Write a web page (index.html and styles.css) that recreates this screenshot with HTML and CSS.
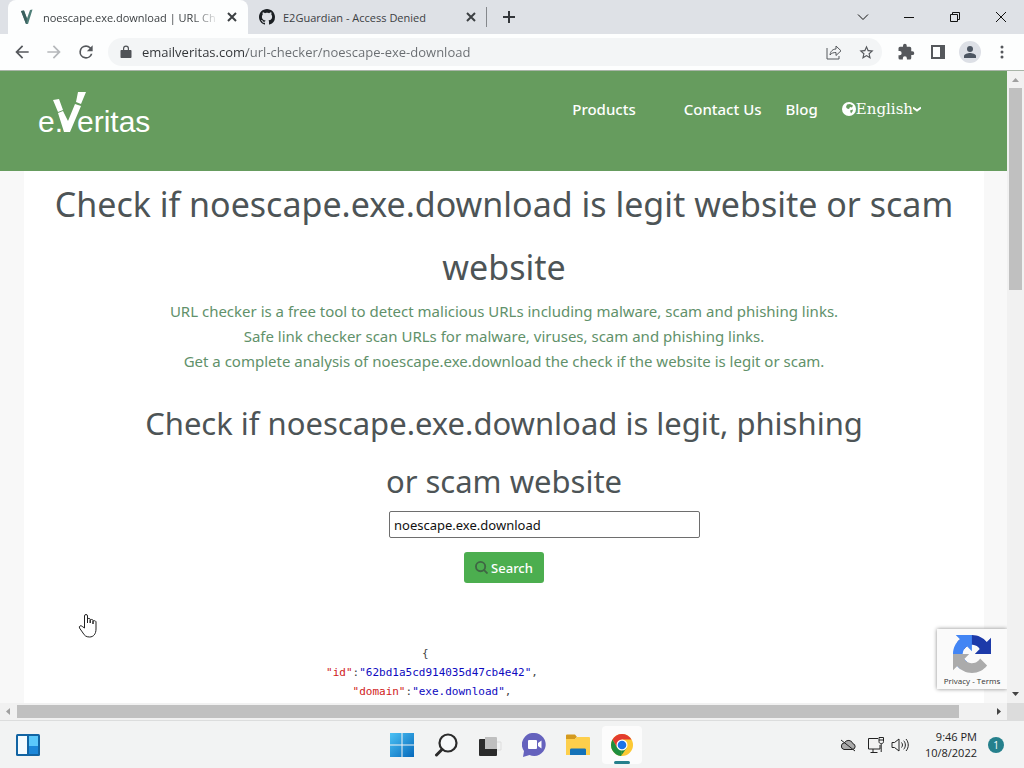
FILE: index.html
```html
<!DOCTYPE html>
<html lang="en">
<head>
  <meta charset="UTF-8" />
  <title>noescape.exe.download | URL Checker</title>
  <meta name="viewport" content="width=device-width, initial-scale=1.0" />
  <link rel="stylesheet" href="styles.css">
</head>
<body>

  <!-- Tabs -->
  <div class="tab-strip">
    <div class="tab active">
      <svg class="favicon" viewBox="0 0 16 16"><path d="M2 2l3-.6L8 9.500 11 1l2.500-.500L9 15H7z" fill="#4f7f78"/><path d="M2 2l3-.6L8 9.500 7.500 15H7z" fill="#3a5f5d"/></svg>
      <a href="#" class="tab-title">noescape.exe.download | URL Ch</a>
      <button class="tab-close" aria-label="Close tab"><svg viewBox="0 0 10 10"><path d="M1 1l8 8M9 1L1 9"/></svg></button>
    </div>
    <div class="tab">
      <svg class="favicon" viewBox="0 0 16 16"><path fill="#1b1f23" fill-rule="evenodd" d="M8 0C3.580 0 0 3.580 0 8c0 3.540 2.290 6.530 5.470 7.590.4.070.55-.17.55-.38 0-.19-.01-.82-.01-1.490-2.010.37-2.530-.49-2.690-.94-.09-.23-.48-.94-.82-1.130-.28-.15-.68-.52-.01-.53.63-.01 1.080.58 1.230.82.72 1.210 1.870.87 2.330.66.070-.52.28-.87.51-1.070-1.780-.2-3.640-.89-3.640-3.950 0-.87.31-1.590.82-2.150-.08-.2-.36-1.020.08-2.120 0 0 .67-.21 2.200.82.64-.18 1.320-.27 2-.27s1.360.09 2 .27c1.530-1.040 2.200-.82 2.200-.82.44 1.100.16 1.920.08 2.120.51.56.82 1.270.82 2.150 0 3.070-1.870 3.750-3.650 3.950.29.25.54.73.54 1.480 0 1.070-.01 1.930-.01 2.200 0 .21.15.46.55.38A8.010 8.010 0 0 0 16 8c0-4.420-3.580-8-8-8z"/></svg>
      <a href="#" class="tab-title">E2Guardian - Access Denied</a>
      <button class="tab-close" aria-label="Close tab"><svg viewBox="0 0 10 10"><path d="M1 1l8 8M9 1L1 9"/></svg></button>
    </div>
    <button class="new-tab" aria-label="New tab"><svg viewBox="0 0 12 12"><path d="M6 0v12M0 6h12"/></svg></button>
    <div class="window-buttons">
      <button aria-label="Search tabs"><svg viewBox="0 0 12 12"><path d="M1 3.500l5 5 5-5"/></svg></button>
      <button aria-label="Minimize"><svg viewBox="0 0 12 12"><path d="M1 6.500h10"/></svg></button>
      <button aria-label="Restore"><svg viewBox="0 0 12 12"><path d="M1.500 3.500h7v7h-7zM3.500 3V1.500h7v7H9"/></svg></button>
      <button aria-label="Close"><svg viewBox="0 0 12 12"><path d="M1 1l10 10M11 1L1 11"/></svg></button>
    </div>
  </div>

  <!-- Address bar -->
  <div class="toolbar">
    <button class="tool nav" aria-label="Back"><svg viewBox="0 0 24 24"><path d="M20 11H7.830l5.590-5.590L12 4l-8 8 8 8 1.410-1.410L7.830 13H20z"/></svg></button>
    <button class="tool nav faded" aria-label="Forward"><svg viewBox="0 0 24 24"><path d="M12 4l-1.410 1.410L16.170 11H4v2h12.170l-5.580 5.590L12 20l8-8z"/></svg></button>
    <button class="tool nav" aria-label="Reload"><svg viewBox="0 0 24 24"><path d="M17.650 6.350A7.960 7.960 0 0 0 12 4a8 8 0 1 0 7.730 10h-2.080A6 6 0 1 1 12 6c1.660 0 3.140.69 4.220 1.780L13 11h7V4z"/></svg></button>
    <div class="omnibox">
      <svg class="lock" viewBox="0 0 12 14"><path d="M1.500 5H3V3.500a3 3 0 0 1 6 0V5h1.500c.6 0 1 .4 1 1v6c0 .6-.4 1-1 1h-9c-.6 0-1-.4-1-1V6c0-.6.400-1 1-1zM4.200 5h3.600V3.500a1.800 1.800 0 0 0-3.600 0z"/></svg>
      <input type="text" class="url" aria-label="Address" value="emailveritas.com/url-checker/noescape-exe-download">
      <button class="tool" aria-label="Share"><svg class="thin" viewBox="0 0 18 18"><path d="M2 5v11h12v-3M5 12c.5-4 3-6 6-6V3l5 4.800-5 4.700V9.500c-2.500 0-4.500.5-6 2.500z"/></svg></button>
      <button class="tool" aria-label="Bookmark"><svg class="star" viewBox="0 0 24 24"><path d="M22 9.240l-7.190-.62L12 2 9.190 8.630 2 9.240l5.460 4.730L5.820 21 12 17.270 18.180 21l-1.630-7.030zM12 15.400l-3.760 2.270 1-4.280-3.320-2.880 4.380-.38L12 6.100l1.710 4.040 4.380.38-3.320 2.880 1 4.280z"/></svg></button>
    </div>
    <button class="tool" aria-label="Extensions"><svg viewBox="0 0 24 24"><path d="M20.500 11H19V7a2 2 0 0 0-2-2h-4V3.500a2.500 2.500 0 0 0-5 0V5H4a2 2 0 0 0-2 2v3.800h1.500a2.700 2.700 0 0 1 0 5.400H2V20a2 2 0 0 0 2 2h3.800v-1.500a2.700 2.700 0 0 1 5.400 0V22H17a2 2 0 0 0 2-2v-4h1.500a2.500 2.500 0 0 0 0-5z"/></svg></button>
    <button class="tool" aria-label="Side panel"><svg viewBox="0 0 18 18"><path fill-rule="evenodd" d="M2 2h14v14H2zM4 4v10h7V4z"/></svg></button>
    <button class="tool avatar" aria-label="Profile"><svg viewBox="0 0 18 18"><circle cx="9" cy="6" r="3"/><path d="M3 15v-2c0-2 4-3 6-3s6 1 6 3v2z"/></svg></button>
    <button class="tool" aria-label="Menu"><svg viewBox="0 0 18 18"><circle cx="9" cy="4" r="1.500"/><circle cx="9" cy="9" r="1.500"/><circle cx="9" cy="14" r="1.500"/></svg></button>
  </div>

  <!-- Web page -->
  <div class="viewport">
    <div class="page">
      <header class="site-header">
        <a href="#" class="logo" aria-label="eVeritas home">
          <svg viewBox="0 0 120 52" width="120" height="52">
            <text x="0" y="42">e.</text>
            <path d="M15 10l6-1 4 11-5 2zM40 2h8l-5 12-5-2zM20 23l5-2 5 10 7-17 6 2-11 26h-6z"/>
            <text x="39" y="42">eritas</text>
          </svg>
        </a>
        <nav class="site-nav">
          <a href="#" class="products">Products</a>
          <a href="#">Contact Us</a>
          <a href="#">Blog</a>
          <button class="language">
            <svg class="globe" viewBox="0 0 14 14"><circle cx="7" cy="7" r="7" fill="#fff"/><path d="M5 2.500l3-.5 3 1.500-1 2-2-.5-1 2-2-.5L4 5zM8 8.500l3-1-.5 2L9 11.500z" fill="#669c5e"/></svg>English<svg class="chevron" viewBox="0 0 8 8"><path d="M0 2.500l4 3 4-3"/></svg>
          </button>
        </nav>
      </header>

      <main class="card">
        <h1>Check if noescape.exe.download is legit website or scam website</h1>
        <p class="intro">
          URL checker is a free tool to detect malicious URLs including malware, scam and phishing links.<br>
          Safe link checker scan URLs for malware, viruses, scam and phishing links.<br>
          Get a complete analysis of noescape.exe.download the check if the website is legit or scam.
        </p>
        <h2>Check if noescape.exe.download is legit, phishing or scam website</h2>
        <form class="search-form">
          <input type="text" class="domain" aria-label="Website address" value="noescape.exe.download">
          <button type="button" class="search">
            <svg viewBox="0 0 14 14"><circle cx="6" cy="6" r="5"/><path d="M9.500 9.500l4 4"/></svg>Search
          </button>
        </form>
<pre class="result">{  
<span class="key">"id"</span>:<span class="value">"62bd1a5cd914035d47cb4e42"</span>,
<span class="key">"domain"</span>:<span class="value">"exe.download"</span>,</pre>
      </main>

      <div class="captcha">
        <svg viewBox="0 0 64 64">
          <path fill="#1c3aa9" d="M64 31.955l-.033-1.370V4.687l-7.160 7.160C50.948 4.674 42.033.093 32.050.093c-10.400 0-19.622 4.960-25.458 12.640l11.736 11.860a15.550 15.550 0 0 1 4.754-5.334c2.050-1.600 4.952-2.906 8.968-2.906.485 0 .86.057 1.135.163 4.976.393 9.288 3.140 11.828 7.124l-8.307 8.307L64 31.953"/>
          <path fill="#4285f4" d="M31.862.094l-1.370.033H4.594l7.160 7.160C4.580 13.147 0 22.060 0 32.046c0 10.400 4.960 19.622 12.640 25.458L24.500 45.768a15.550 15.550 0 0 1-5.334-4.754c-1.600-2.050-2.906-4.952-2.906-8.968 0-.485.057-.86.163-1.135.393-4.976 3.140-9.288 7.124-11.828l8.307 8.307L31.860.095"/>
          <path fill="#ababab" d="M.001 32.045l.033 1.370v25.898l7.160-7.160c5.860 7.173 14.774 11.754 24.760 11.754 10.400 0 19.622-4.960 25.458-12.640l-11.736-11.860a15.550 15.550 0 0 1-4.754 5.334c-2.050 1.600-4.952 2.906-8.968 2.906-.485 0-.86-.057-1.135-.163-4.976-.393-9.288-3.140-11.828-7.124l8.307-8.307c-10.522.04-22.400.066-27.295-.005"/>
        </svg>
        <div class="captcha-links"><a href="#">Privacy</a> - <a href="#">Terms</a></div>
      </div>

      <svg class="hand" viewBox="0 0 20 25"><path d="M6.500 15V3a1.500 1.500 0 0 1 3 0v7-3.500c0-1.500 2.700-1.500 2.700 0V10 7.500c0-1.400 2.800-1.400 2.800 0V11 8.500c0-1.300 3-1 3 .500v7c0 5-2.500 8-6.500 8-3.500 0-5-1.500-6.500-4L1.500 15c-1-2 1.500-3 2.700-1.600z"/></svg>
    </div>

    <div class="scroll-y">
      <svg viewBox="0 0 17 17" class="off"><path d="M5 11l3.500-4 3.500 4z"/></svg>
      <div class="thumb"></div>
      <svg viewBox="0 0 17 17"><path d="M5 6l3.500 4L12 6z"/></svg>
    </div>
    <div class="scroll-x">
      <svg viewBox="0 0 17 17" class="off"><path d="M10 5L6 8.500l4 3.500z"/></svg>
      <div class="thumb"></div>
      <svg viewBox="0 0 17 17"><path d="M7 5l4 3.500L7 12z"/></svg>
    </div>
    <div class="corner"></div>
  </div>

  <!-- Taskbar -->
  <footer class="taskbar">
    <button class="widgets" aria-label="Widgets">
      <svg viewBox="0 0 24 22"><rect width="24" height="22" rx="1.500" fill="#1264a3"/><rect x="2" y="2" width="9" height="18" fill="#f4fbff"/><rect x="13" y="2" width="9" height="10" fill="#5bc8fb"/><rect x="13" y="12" width="9" height="8" fill="#1c87d9"/></svg>
    </button>
    <div class="apps">
      <button aria-label="Start"><svg viewBox="0 0 24 24"><defs><linearGradient id="win" x2="1" y2="1"><stop stop-color="#4cc2f5"/><stop offset="1" stop-color="#0669bb"/></linearGradient></defs><path fill="url(#win)" d="M0 0h11.500v11.500H0zM12.500 0H24v11.500H12.500zM0 12.500h11.500V24H0zM12.500 12.500H24V24H12.500z"/></svg></button>
      <button aria-label="Search"><svg viewBox="0 0 24 24"><circle cx="14" cy="10" r="8.500" fill="#f6f8f9" stroke="#2b2b2b" stroke-width="2.200"/><path d="M8 16.500L2.500 22" stroke="#2b2b2b" stroke-width="3" stroke-linecap="round"/></svg></button>
      <button aria-label="Task view"><svg viewBox="0 0 24 24"><path d="M18 9h5v8h-5" fill="none" stroke="#ddd"/><rect x="1" y="6" width="18" height="17" rx="1" fill="#2b2b2b"/><path d="M7 4h11a1 1 0 0 1 1 1v11H7z" fill="#bfbfbf"/></svg></button>
      <button aria-label="Chat"><svg viewBox="0 0 24 24"><path d="M12.500 0a11.500 11.500 0 1 1-5 22L1 24l1-6A11.500 11.500 0 0 1 12.500 0z" fill="#6562bd"/><rect x="6" y="7" width="9" height="9" rx="1" fill="#fff"/><path d="M16 10l3.500-2.500v8L16 13z" fill="#fff"/></svg></button>
      <button aria-label="File Explorer"><svg viewBox="0 0 24 24"><path d="M0 2.500a1 1 0 0 1 1-1h8l2 2.500-2 2H0z" fill="#d49a1f"/><path d="M0 6h9l2-2h12a1 1 0 0 1 1 1v17H0z" fill="#fdcf4c"/><path d="M4 22v-5c0-1 .500-1.500 1.500-1.500h13c1 0 1.500.5 1.500 1.500v5z" fill="#1472b8"/></svg></button>
      <button class="running" aria-label="Chrome"><svg viewBox="0 0 24 24"><circle cx="12" cy="12" r="11" fill="#fcc934"/><path d="M2.500 6.500A11 11 0 0 1 21.500 6.500H12L7.200 14.800z" fill="#e33b2e"/><path d="M2.500 6.500l4.700 8.300 4.800 2.700L11 23A11 11 0 0 1 2.500 6.500z" fill="#1e8e3e"/><path d="M11 23l5.800-8.200L12 17z" fill="#1e8e3e"/><circle cx="12" cy="12" r="5.500" fill="#fff"/><circle cx="12" cy="12" r="4.300" fill="#1a73e8"/></svg></button>
    </div>
    <div class="tray">
      <svg viewBox="0 0 16 16"><path d="M4 12.500h8.500a3 3 0 0 0 .3-5.900A4.500 4.500 0 0 0 4.500 5.800 3.400 3.400 0 0 0 4 12.500z" fill="#aaa"/><path d="M1 3l14 11"/></svg>
      <svg class="network" viewBox="0 0 18 16"><path d="M11 1.500H1.500v10.500H13V8M6 12v3.500M3.500 15.500h7M12 .500h4.500v4c0 1.500-.7 2-2.200 2S12 6 12 4.500zM12 3h4.500M14.200 7v8"/></svg>
      <svg class="volume" viewBox="0 0 18 16"><path d="M1 5.500h2.500L8 2v12l-4.500-3.500H1zM10.500 5.500c1.300 1.500 1.300 3.500 0 5M12.700 3.700c2.200 2.500 2.200 6.100 0 8.600M15 2c3 3.500 3 8.500 0 12"/></svg>
      <div class="clock"><time>9:46 PM</time><time>10/8/2022</time></div>
      <div class="notice">1</div>
    </div>
  </footer>

</body>
</html>
```
FILE: styles.css
```css
* { margin: 0; padding: 0; box-sizing: border-box; }

body {
  font-family: "Open Sans", "Noto Sans", sans-serif;
  font-size: 11px;
  color: #3c4043;
  height: 100vh;
  display: flex;
  flex-direction: column;
  overflow: hidden;
}

button { border: 0; background: none; font: inherit; color: inherit; }
a { color: inherit; text-decoration: none; }
svg { display: block; flex: none; }

/* Tabs */
.tab-strip {
  display: flex;
  align-items: center;
  height: 34px;
  padding-left: 8px;
  background: #dee1e6;
}

.tab {
  display: flex;
  align-items: center;
  gap: 8px;
  width: 239px;
  height: 34px;
  padding: 0 10px 0 11px;
  border-right: 1px solid transparent;
}

.tab:not(.active) {
  height: 20px;
  border-right-color: #85888c;
}

.active {
  width: 240px;
  background: #fdfefe;
  border-radius: 8px 8px 0 0;
}

.favicon { width: 16px; height: 16px; }

.tab-title {
  flex: 1;
  white-space: nowrap;
}

.active .tab-title {
  mask-image: linear-gradient(to right, #000 85%, transparent);
}

.tab-close {
  display: grid;
  place-items: center;
  width: 10px;
  height: 16px;
}

.tab-close svg { width: 10px; height: 10px; stroke: #3c4043; stroke-width: 2; }

.new-tab { padding: 0 16px; }
.new-tab svg { width: 12px; height: 12px; stroke: #33363a; stroke-width: 2; }

.window-buttons { display: flex; margin-left: auto; }

.window-buttons button {
  display: grid;
  place-items: center;
  width: 46px;
  height: 28px;
}

.window-buttons svg { width: 12px; height: 12px; fill: none; stroke: #111; }

/* Address bar */
.toolbar {
  display: flex;
  align-items: center;
  height: 37px;
  padding: 0 6px;
  background: #fdfefe;
  border-bottom: 1px solid #a9b5a8;
}

.tool {
  display: grid;
  place-items: center;
  width: 32px;
  height: 28px;
}

.tool svg { width: 18px; height: 18px; fill: #55585c; }
.nav svg { width: 20px; height: 20px; }
.tool.faded svg { fill: #b5b8bb; }
.tool .thin { fill: none; stroke: #55585c; }
.tool .star { width: 17px; height: 17px; }

.avatar svg {
  width: 22px;
  height: 22px;
  padding: 2px;
  border-radius: 50%;
  background: #dde0e6;
  fill: #4d5662;
}

.omnibox {
  display: flex;
  align-items: center;
  flex: 1;
  height: 28px;
  margin: 0 8px 0 6px;
  padding-left: 12px;
  border-radius: 14px;
  background: #f3f5f6;
}

.lock { width: 12px; height: 14px; fill: #505357; }

.url {
  flex: 1;
  margin-left: 10px;
  border: 0;
  outline: 0;
  font: 13px/20px "Open Sans", "Noto Sans", sans-serif;
  color: #303336;
  background: linear-gradient(to right, #303336 105px, #686c70 105px) text;
  -webkit-text-fill-color: transparent;
}

/* Page and scrollbars */
.viewport {
  flex: 1;
  min-height: 0;
  display: grid;
  grid-template-columns: minmax(0, 1fr) 17px;
  grid-template-rows: minmax(0, 1fr) 17px;
}

.page {
  position: relative;
  display: flex;
  flex-direction: column;
  overflow: hidden;
  background: #f8f8f8;
  font-family: "Noto Sans", sans-serif;
}

.scroll-y, .scroll-x { display: flex; background: #f1f1f1; }
.scroll-y { flex-direction: column; align-items: center; }
.scroll-x { align-items: center; }
.scroll-y svg, .scroll-x svg { width: 17px; height: 17px; fill: #444; }
.scroll-y .off, .scroll-x .off { fill: #a0a0a0; }
.scroll-y .thumb { width: 13px; height: 32%; margin-bottom: auto; background: #c0c0c0; }
.scroll-x .thumb { width: 93.5%; height: 13px; margin-right: auto; background: #c0c0c0; }
.corner { background: #dcdcdc; }

.site-header {
  display: flex;
  flex: none;
  justify-content: space-between;
  align-items: flex-start;
  height: 100px;
  padding: 19px 86px 0 38px;
  background: #669c5e;
  color: #fff;
}

.logo text {
  font-family: "Liberation Sans", sans-serif;
  font-size: 30px;
  fill: #fff;
}

.logo path { fill: #fff; }

.site-nav {
  display: flex;
  align-items: center;
  gap: 24px;
  height: 38px;
  font-size: 15px;
  font-weight: 500;
}

.products { margin-right: 24px; }

.language {
  display: flex;
  align-items: center;
  font-family: "DejaVu Serif", serif;
}

.globe { width: 14px; height: 14px; }
.chevron { width: 8px; height: 8px; fill: none; stroke: #fff; stroke-width: 2; }

.card {
  flex: 1;
  margin: 0 23px 0 24px;
  padding-top: 2px;
  background: #fff;
  text-align: center;
}

h1, h2 { color: #4d5456; font-weight: 400; }
h1 { padding: 0 24px; font-size: 34px; line-height: 63px; }

.intro {
  color: #61916a;
  font-size: 15px;
  line-height: 25px;
}

h2 {
  padding: 0 110px;
  margin-top: 20px;
  font-size: 31px;
  line-height: 58px;
}

.search-form {
  display: flex;
  flex-direction: column;
  align-items: center;
  gap: 14px;
  padding-top: 1px;
  font-size: 13px;
}

.domain {
  width: 311px;
  height: 27px;
  margin-left: 81px;
  padding: 0 4px;
  border: 1px solid #6e6e6e;
  border-radius: 2px;
  font: inherit;
  color: #111;
}

.search {
  display: flex;
  align-items: center;
  gap: 3px;
  height: 31px;
  padding: 0 11px;
  border-radius: 3px;
  background: #4cae4f;
  color: #fff;
  font-weight: 500;
}

.search svg { width: 13px; height: 13px; fill: none; stroke: #3f6544; stroke-width: 2; }

.result {
  margin: 61px 144px 0 0;
  font: 11px/19px "DejaVu Sans Mono", monospace;
  color: #444;
}

.key { color: #d01a1a; }
.value { color: #0d09c0; }

/* Floating over the page */
.captcha {
  position: absolute;
  right: 0;
  bottom: 14px;
  width: 70px;
  height: 60px;
  padding-top: 6px;
  background: #fafafa;
  box-shadow: 0 0 4px #888;
  text-align: center;
}

.captcha svg { width: 38px; height: 38px; margin: 0 auto; }
.captcha-links { font: 8px/16px "Open Sans", sans-serif; color: #333; }

.hand {
  position: absolute;
  left: 78px;
  top: 542px;
  width: 20px;
  height: 25px;
  fill: #fff;
  stroke: #222;
}

/* Taskbar */
.taskbar {
  display: grid;
  grid-template-columns: 1fr auto 1fr;
  align-items: center;
  height: 48px;
  padding: 0 16px;
  background: #f2f3f3;
  border-top: 1px solid #dcdddd;
}

.widgets { justify-self: start; }
.widgets svg { width: 24px; height: 22px; }

.apps { display: flex; gap: 4px; }

.apps button {
  display: grid;
  place-items: center;
  position: relative;
  width: 40px;
  height: 38px;
  border-radius: 4px;
}

.apps svg { width: 24px; height: 24px; }
.apps .running { background: #fcfcfc; }

.running::after {
  content: "";
  position: absolute;
  bottom: 0;
  left: 12px;
  width: 16px;
  height: 3px;
  border-radius: 2px;
  background: #25808c;
}

.tray {
  display: flex;
  justify-content: flex-end;
  align-items: center;
  padding-right: 4px;
}

.tray svg { width: 16px; height: 16px; fill: none; stroke: #222; }
.tray .network { width: 18px; margin-left: 11px; }
.tray .volume { width: 18px; margin-left: 6px; }

.clock {
  display: flex;
  flex-direction: column;
  margin-left: 16px;
  text-align: right;
  line-height: 16px;
  color: #222;
}

.notice {
  width: 16px;
  height: 16px;
  margin-left: 11px;
  border-radius: 50%;
  background: #25808c;
  color: #fff;
  font-size: 10px;
  line-height: 16px;
  text-align: center;
}
```
